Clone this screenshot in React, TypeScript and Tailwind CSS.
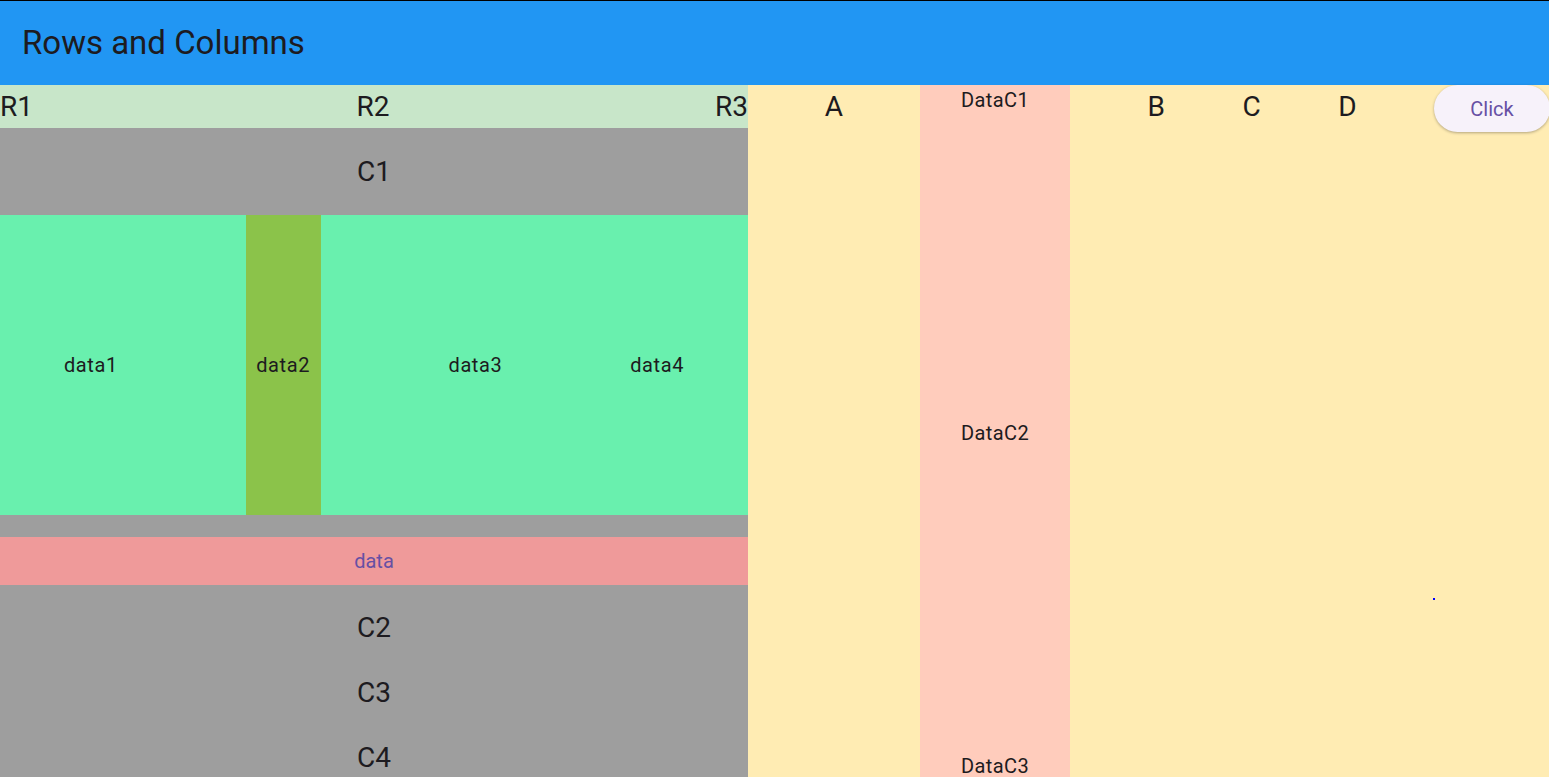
import React from "react";

export default function App() {
  const f = { fontFamily: "Roboto, 'Noto Sans', sans-serif" } as React.CSSProperties;
  return (
    <div style={f} className="w-[1549px] h-[777px] overflow-hidden flex flex-col bg-white text-[#1d1b20]">
      <div className="h-[85px] shrink-0 border-t border-black bg-[#2196f3] flex items-center pl-[22px]">
        <span className="text-[33px] leading-none pb-[1px]">Rows and Columns</span>
      </div>
      <div className="flex flex-1 min-h-0">
        <div className="w-[748px] shrink-0 flex flex-col bg-[#9e9e9e] overflow-hidden">
          <div className="h-[43px] shrink-0 bg-[#c8e6c9] flex justify-between items-center text-[28px] leading-none pt-[1px]">
            <span>R1</span>
            <span className="pr-[2px]">R2</span>
            <span>R3</span>
          </div>
          <div className="h-[87px] shrink-0 flex items-center justify-center text-[28px] leading-none">C1</div>
          <div className="h-[300px] shrink-0 bg-[#69f0ae] flex justify-around items-center text-[20px] tracking-[0.6px]">
            <span>data1</span>
            <div className="w-[75px] self-stretch bg-[#8bc34a] flex items-center justify-center">data2</div>
            <span>data3</span>
            <span>data4</span>
          </div>
          <div className="h-[22px] shrink-0" />
          <div className="h-[48px] shrink-0 bg-[#ef9a9a] flex items-center justify-center text-[20px] text-[#6750a4]">data</div>
          <div className="pt-[10px] shrink-0 flex flex-col text-[28px] leading-none">
            <div className="h-[65px] shrink-0 flex items-center justify-center">C2</div>
            <div className="h-[65px] shrink-0 flex items-center justify-center">C3</div>
            <div className="h-[65px] shrink-0 flex items-center justify-center">C4</div>
          </div>
        </div>
        <div className="flex-1 relative bg-[#ffecb3] flex items-start">
          <div className="w-[172px] h-[44px] flex items-center justify-center text-[28px] leading-none">A</div>
          <div className="w-[150px] self-stretch bg-[#ffccbc] flex flex-col justify-between items-center pt-[4px] text-[20px] leading-[22px] tracking-[0.4px]">
            <span>DataC1</span>
            <span>DataC2</span>
            <span>DataC3</span>
          </div>
          <div className="w-[364px] h-[44px] flex justify-evenly items-center text-[28px] leading-none">
            <span>B</span>
            <span>C</span>
            <span>D</span>
          </div>
          <button className="w-[116px] h-[47px] shrink-0 rounded-full bg-[#f7f2fa] shadow-[0_1px_3px_rgba(0,0,0,0.3)] text-[20px] text-[#6750a4] flex items-center justify-center pt-[1px]">
            Click
          </button>
          <div className="absolute left-[685px] top-[513px] w-[2px] h-[2px] bg-[#0000ff]" />
        </div>
      </div>
    </div>
  );
}
